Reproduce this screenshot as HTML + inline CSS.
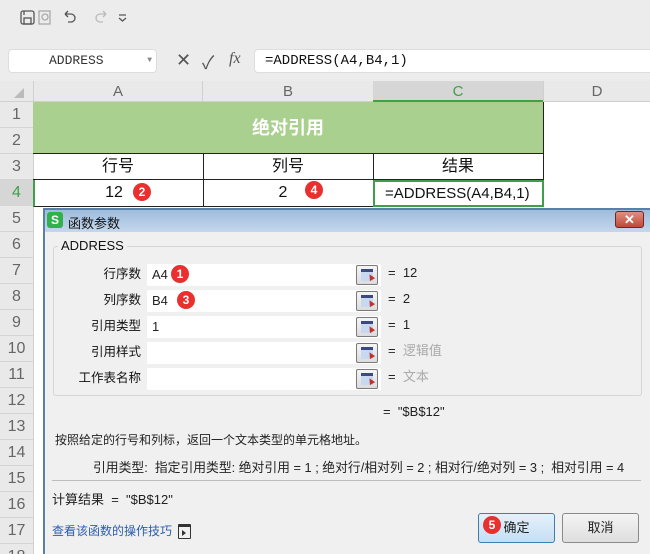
<!DOCTYPE html>
<html><head><meta charset="utf-8"><style>
*{box-sizing:border-box;margin:0;padding:0}
html,body{width:650px;height:554px;overflow:hidden}
body{background:#fff;font-family:"Liberation Sans","Noto Sans CJK SC",sans-serif;position:relative;font-size:13px;color:#222}
.abs{position:absolute}
.badge{position:absolute;width:18px;height:18px;border-radius:50%;background:#e8312f;color:#fff;font-size:12px;text-align:center;line-height:18px;font-weight:bold}
.rh{position:absolute;left:0;width:33px;height:26px;border-bottom:1px solid #d4d4d4;text-align:center;line-height:26px;color:#666;font-size:16px;background:#e9e9e9}
.cell{position:absolute;border-right:1px solid #222;border-bottom:1px solid #222;text-align:center;font-size:16px;color:#111}
.lbl{position:absolute;width:88px;text-align:right;font-size:12.5px;line-height:16px;color:#111}
.inp{position:absolute;left:147px;width:234px;height:22px;background:#fff;padding-left:5px;line-height:22px;font-size:13px}
.ib{position:absolute;left:356px;width:22px;height:20px;border:1px solid #7a7a7a;border-radius:2px;background:linear-gradient(#f5f5f5,#dcdcdc)}
.ib i{position:absolute;left:4px;top:3px;width:12px;height:12px;background:#c8d8f0;border-top:3px solid #3a4a80}
.ib b{position:absolute;left:11px;top:8px;width:0;height:0;border-left:3px solid transparent;border-right:3px solid transparent;border-bottom:6px solid #c03030;transform:rotate(-30deg)}
.eq{position:absolute;left:388px;font-size:13px;line-height:16px}
.gray{color:#aaa}
</style></head><body>
<div class="abs" style="left:0;top:0;width:650px;height:81px;background:#ececec"></div>
<svg class="abs" style="left:18px;top:8px" width="130" height="20" viewBox="0 0 130 20" fill="none" stroke="#555" stroke-width="1.3">
<rect x="3" y="3" width="13" height="13" rx="2"/><rect x="6" y="10" width="7" height="6"/><line x1="6" y1="3" x2="6" y2="7"/>
<rect x="21" y="3" width="11" height="13" stroke="#aaa"/><circle cx="27" cy="9" r="3" stroke="#aaa"/>
<path d="M47 6 h6 a4 4 0 0 1 0 8 h-3 M47 6 l3 -3 M47 6 l3 3"/>
<path d="M88 6 h-6 a4 4 0 0 0 0 8 h3 M88 6 l-3 -3 M88 6 l-3 3" stroke="#bbb"/>
<path d="M101 7 h7 M101 10 l3.5 3 l3.5 -3"/>
</svg>
<div class="abs" style="left:8px;top:49px;width:149px;height:24px;background:#fff;border:1px solid #ddd;border-radius:4px;font-family:'Liberation Mono',monospace;font-size:13px;line-height:22px;padding-left:40px;color:#333">ADDRESS<span style="position:absolute;right:4px;font-size:8px;color:#888">▼</span></div>
<div class="abs" style="left:176px;top:50px;font-size:18px;color:#555">✕</div>
<div class="abs" style="left:202px;top:49px;font-size:18px;color:#555">✓</div>
<div class="abs" style="left:229px;top:50px;font-size:16px;color:#555;font-style:italic;font-family:'Liberation Serif',serif">fx</div>
<div class="abs" style="left:254px;top:49px;width:400px;height:24px;background:#fff;border:1px solid #ddd;border-radius:4px;font-family:'Liberation Mono',monospace;font-size:14px;line-height:22px;padding-left:10px;color:#111">=ADDRESS(A4,B4,1)</div>
<div class="abs" style="left:0;top:81px;width:650px;height:21px;background:#e9e9e9;border-bottom:1px solid #d0d0d0"></div>
<div class="abs" style="left:14px;top:88px;width:0;height:0;border-left:10px solid transparent;border-bottom:10px solid #bbb"></div>
<div class="abs" style="left:33px;top:81px;width:170px;height:21px;border-left:1px solid #d0d0d0;border-right:1px solid #d0d0d0;text-align:center;line-height:21px;color:#666;font-size:15px">A</div>
<div class="abs" style="left:203px;top:81px;width:170px;height:21px;text-align:center;line-height:21px;color:#666;font-size:15px">B</div>
<div class="abs" style="left:373px;top:81px;width:170px;height:21px;background:#d6d6d6;border-bottom:2px solid #3ea04a;text-align:center;line-height:21px;color:#3ea04a;font-size:15px">C</div>
<div class="abs" style="left:543px;top:81px;width:107px;height:21px;text-align:center;line-height:21px;color:#666;font-size:15px;border-left:1px solid #d0d0d0">D</div>
<div class="rh" style="top:102px">1</div><div class="rh" style="top:128px">2</div><div class="rh" style="top:154px">3</div>
<div class="rh" style="top:180px;color:#3ea04a;background:#d6d6d6">4</div>
<div class="rh" style="top:206px">5</div><div class="rh" style="top:232px">6</div><div class="rh" style="top:258px">7</div><div class="rh" style="top:284px">8</div><div class="rh" style="top:310px">9</div><div class="rh" style="top:336px">10</div><div class="rh" style="top:362px">11</div><div class="rh" style="top:388px">12</div><div class="rh" style="top:414px">13</div><div class="rh" style="top:440px">14</div><div class="rh" style="top:466px">15</div><div class="rh" style="top:492px">16</div><div class="rh" style="top:518px">17</div><div class="rh" style="top:544px">18</div>
<div class="abs" style="left:33px;top:102px;width:1px;height:452px;background:#d0d0d0"></div>
<div class="abs" style="left:33px;top:102px;width:511px;height:52px;background:#a9d08e;border-right:1px solid #222;border-bottom:1px solid #222;color:#fff;font-weight:bold;font-size:18px;text-align:center;line-height:52px">绝对引用</div>
<div class="cell" style="left:33px;top:154px;width:171px;height:26px;line-height:25px">行号</div>
<div class="cell" style="left:203px;top:154px;width:171px;height:26px;line-height:25px">列号</div>
<div class="cell" style="left:373px;top:154px;width:171px;height:26px;line-height:25px">结果</div>
<div class="cell" style="left:33px;top:180px;width:171px;height:27px;line-height:26px;border-left:2px solid #3ea04a;padding-right:10px">12</div>
<div class="badge" style="left:133px;top:183px">2</div>
<div class="cell" style="left:203px;top:180px;width:171px;height:27px;line-height:26px;padding-right:10px">2</div>
<div class="badge" style="left:305px;top:181px">4</div>
<div class="cell" style="left:373px;top:180px;width:171px;height:27px;line-height:24px;border:2px solid #3ea04a;text-align:left;padding-left:10px;font-size:15px">=ADDRESS(A4,B4,1)</div>
<div class="abs" style="left:43px;top:208px;width:607px;height:346px;background:#f0f0f0;border:2px solid #5a7fa8;border-right:none;border-bottom:none"></div>
<div class="abs" style="left:45px;top:210px;width:605px;height:22px;background:linear-gradient(#9fbcdc,#c4d7ec)"></div>
<div class="abs" style="left:47px;top:212px;width:16px;height:16px;background:#2fb24c;border-radius:3px;color:#fff;font-weight:bold;font-size:12px;text-align:center;line-height:16px">S</div>
<div class="abs" style="left:68px;top:213px;font-size:13px;color:#111">函数参数</div>
<div class="abs" style="left:615px;top:211px;width:29px;height:17px;border-radius:3px;background:linear-gradient(#e08f80,#c0483a);border:1px solid #6b2a20;color:#fff;text-align:center;font-size:13px;font-weight:bold;line-height:15px">✕</div>
<div class="abs" style="left:53px;top:246px;width:589px;height:150px;border:1px solid #d6d6d6;border-radius:3px"></div>
<div class="abs" style="left:58px;top:238px;background:#f0f0f0;padding:0 3px;font-size:13px;color:#111">ADDRESS</div>
<div class="lbl" style="left:53px;top:266px">行序数</div>
<div class="lbl" style="left:53px;top:292px">列序数</div>
<div class="lbl" style="left:53px;top:318px">引用类型</div>
<div class="lbl" style="left:53px;top:344px">引用样式</div>
<div class="lbl" style="left:53px;top:370px">工作表名称</div>
<div class="inp" style="top:264px">A4</div>
<div class="inp" style="top:290px">B4</div>
<div class="inp" style="top:316px">1</div>
<div class="inp" style="top:342px"></div>
<div class="inp" style="top:368px"></div>
<div class="badge" style="left:171px;top:265px">1</div>
<div class="badge" style="left:177px;top:291px">3</div>
<div class="ib" style="top:265px"><i></i><b></b></div>
<div class="ib" style="top:291px"><i></i><b></b></div>
<div class="ib" style="top:317px"><i></i><b></b></div>
<div class="ib" style="top:343px"><i></i><b></b></div>
<div class="ib" style="top:369px"><i></i><b></b></div>
<div class="eq" style="top:265px">=&nbsp; 12</div>
<div class="eq" style="top:291px">=&nbsp; 2</div>
<div class="eq" style="top:317px">=&nbsp; 1</div>
<div class="eq" style="top:343px">= &nbsp;<span class="gray">逻辑值</span></div>
<div class="eq" style="top:369px">= &nbsp;<span class="gray">文本</span></div>
<div class="abs" style="left:383px;top:404px;font-size:13px">= &nbsp;"$B$12"</div>
<div class="abs" style="left:55px;top:431px;font-size:12px">按照给定的行号和列标，返回一个文本类型的单元格地址。</div>
<div class="abs" style="left:93px;top:457px;font-size:12.8px;white-space:nowrap">引用类型:&nbsp; 指定引用类型: 绝对引用 = 1 ; 绝对行/相对列 = 2 ; 相对行/绝对列 = 3 ;&nbsp; 相对引用 = 4</div>
<div class="abs" style="left:52px;top:480px;width:589px;height:1px;background:#bdbdbd"></div>
<div class="abs" style="left:52px;top:489px;font-size:13px">计算结果 &nbsp;= &nbsp;"$B$12"</div>
<div class="abs" style="left:52px;top:522px;font-size:12px;color:#2a5db0">查看该函数的操作技巧</div>
<div class="abs" style="left:178px;top:524px;width:13px;height:15px;border:1.5px solid #333;border-radius:1px;border-top-width:3px"><div style="position:absolute;left:3px;top:3px;border-left:4px solid #333;border-top:3px solid transparent;border-bottom:3px solid transparent"></div></div>
<div class="abs" style="left:478px;top:513px;width:77px;height:30px;border:1px solid #3c7fb1;border-radius:3px;background:linear-gradient(#e5f1fb,#c4dff4);text-align:center;line-height:28px;font-size:13px">确定</div>
<div class="badge" style="left:483px;top:516px">5</div>
<div class="abs" style="left:562px;top:513px;width:77px;height:30px;border:1px solid #8a8a8a;border-radius:3px;background:linear-gradient(#f4f4f4,#dedede);text-align:center;line-height:28px;font-size:13px">取消</div>
</body></html>
